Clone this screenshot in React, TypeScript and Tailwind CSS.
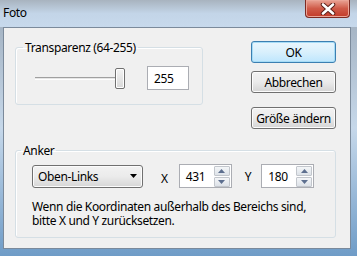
const font = "font-['Noto_Sans',sans-serif] text-[12px] leading-[15px] tracking-[-0.35px] text-black";

const SpinBox = ({ value }: { value: string }) => {
  return (
    <div className="flex items-center h-[24px] w-[53px] border border-[#abadb3] bg-white pl-[6px]">
      <span className="flex-1">{value}</span>
      <div className="flex flex-col gap-[1px] mr-[1px]">
        <div className="w-[16px] h-[10px] border border-[#c2c6cc] bg-gradient-to-b from-[#f4f6f8] to-[#dde2e8] flex items-center justify-center rounded-[1px]">
          <svg width="7" height="4" viewBox="0 0 7 4">
            <path d="M0 4 L3.5 0 L7 4 Z" fill="#5d6f8f" />
          </svg>
        </div>
        <div className="w-[16px] h-[10px] border border-[#c2c6cc] bg-gradient-to-b from-[#f4f6f8] to-[#dde2e8] flex items-center justify-center rounded-[1px]">
          <svg width="7" height="4" viewBox="0 0 7 4">
            <path d="M0 0 L3.5 4 L7 0 Z" fill="#5d6f8f" />
          </svg>
        </div>
      </div>
    </div>
  );
};

const Button = ({ label, primary }: { label: string; primary?: boolean }) => {
  return (
    <button
      className={
        primary
          ? "w-[85px] h-[22px] rounded-[3px] border border-[#3c7fb1] bg-gradient-to-b from-[#eaf6fd] via-[#d9f0fc] to-[#bee6fd] shadow-[inset_0_0_0_1px_#a6dcf6] flex items-center justify-center"
          : "w-[85px] h-[22px] rounded-[3px] border border-[#707070] bg-gradient-to-b from-[#f2f2f2] via-[#ebebeb] to-[#d4d4d4] shadow-[inset_0_0_0_1px_#fcfcfc] flex items-center justify-center"
      }
    >
      {label}
    </button>
  );
};

export default function App() {
  return (
    <div className={`w-[357px] h-[256px] flex flex-col overflow-hidden bg-gradient-to-b from-[#9eacbb] via-[#c6d8ea] to-[#6f9cc7] ${font}`}>
      {/* title bar */}
      <div className="h-[27px] flex justify-between items-start bg-gradient-to-b from-[#a8b3bf] via-[#c3d5e8] to-[#c7d9ec]">
        <span className="pl-[3px] pt-[5px]">Foto</span>
        <div className="mr-[7px] w-[45px] h-[18px] rounded-b-[4px] border border-t-0 border-[#7d2a22] bg-gradient-to-b from-[#e9a496] via-[#cf5a48] to-[#c23a28] shadow-[inset_0_0_0_1px_#eba597] flex items-center justify-center">
          <svg width="16" height="12" viewBox="0 0 16 12">
            <path d="M3 1.5 L13 10.5 M13 1.5 L3 10.5" stroke="#5a1e17" strokeWidth="4.5" strokeLinecap="round" />
            <path d="M3 1.5 L13 10.5 M13 1.5 L3 10.5" stroke="#ffffff" strokeWidth="2.6" strokeLinecap="round" />
          </svg>
        </div>
      </div>

      {/* client area */}
      <div className="ml-[3px] mr-[6px] h-[222px] border border-[#7b8a9b] bg-[#f0f0f0] flex flex-col">
        <div className="flex">
          <fieldset className="ml-[11px] mt-[12px] w-[188px] h-[65px] border border-[#d5dfe5] rounded-[3px] shadow-[inset_1px_1px_0_#fff]">
            <legend className="ml-[7px] px-[2px]">Transparenz (64-255)</legend>
            <div className="flex items-center pt-[11px]">
              <div className="ml-[19px] w-[90px] h-[21px] flex items-center">
                <div className="flex-1 h-[3px] border-t border-[#a0a0a0] border-b border-b-white bg-[#e6e6e6]" />
                <div className="w-[10px] h-[21px] rounded-[2px] border border-[#707070] bg-gradient-to-b from-[#f4f4f4] to-[#d8d8d8] shadow-[inset_0_0_0_1px_#fff]" />
              </div>
              <div className="ml-[22px] w-[42px] h-[24px] border border-[#abadb3] bg-white flex items-center pl-[6px]">255</div>
            </div>
          </fieldset>
          <div className="ml-[48px] mt-[13px] flex flex-col">
            <Button label="OK" primary />
            <div className="mt-[8px]">
              <Button label="Abbrechen" />
            </div>
            <div className="mt-[14px]">
              <Button label="Größe ändern" />
            </div>
          </div>
        </div>

        <fieldset className="ml-[11px] mt-[14px] w-[321px] h-[95px] border border-[#d5dfe5] rounded-[3px] shadow-[inset_1px_1px_0_#fff]">
          <legend className="ml-[5px] px-[2px]">Anker</legend>
          <div className="flex items-center pt-[6px]">
            <div className="ml-[16px] w-[111px] h-[23px] rounded-[3px] border border-[#707070] bg-gradient-to-b from-[#f2f2f2] via-[#ebebeb] to-[#d6d6d6] shadow-[inset_0_0_0_1px_#fcfcfc] flex items-center justify-between pl-[5px] pr-[5px]">
              <span>Oben-Links</span>
              <svg width="7" height="4" viewBox="0 0 7 4">
                <path d="M0 0 L3.5 4 L7 0 Z" fill="#000" />
              </svg>
            </div>
            <span className="ml-[18px] mt-[4px]">X</span>
            <div className="ml-[11px]">
              <SpinBox value="431" />
            </div>
            <span className="ml-[13px]">Y</span>
            <div className="ml-[10px]">
              <SpinBox value="180" />
            </div>
          </div>
          <p className="ml-[16px] mt-[12px] leading-[14px]">
            Wenn die Koordinaten außerhalb des Bereichs sind,
            <br />
            bitte X und Y zurücksetzen.
          </p>
        </fieldset>
      </div>
    </div>
  );
}
